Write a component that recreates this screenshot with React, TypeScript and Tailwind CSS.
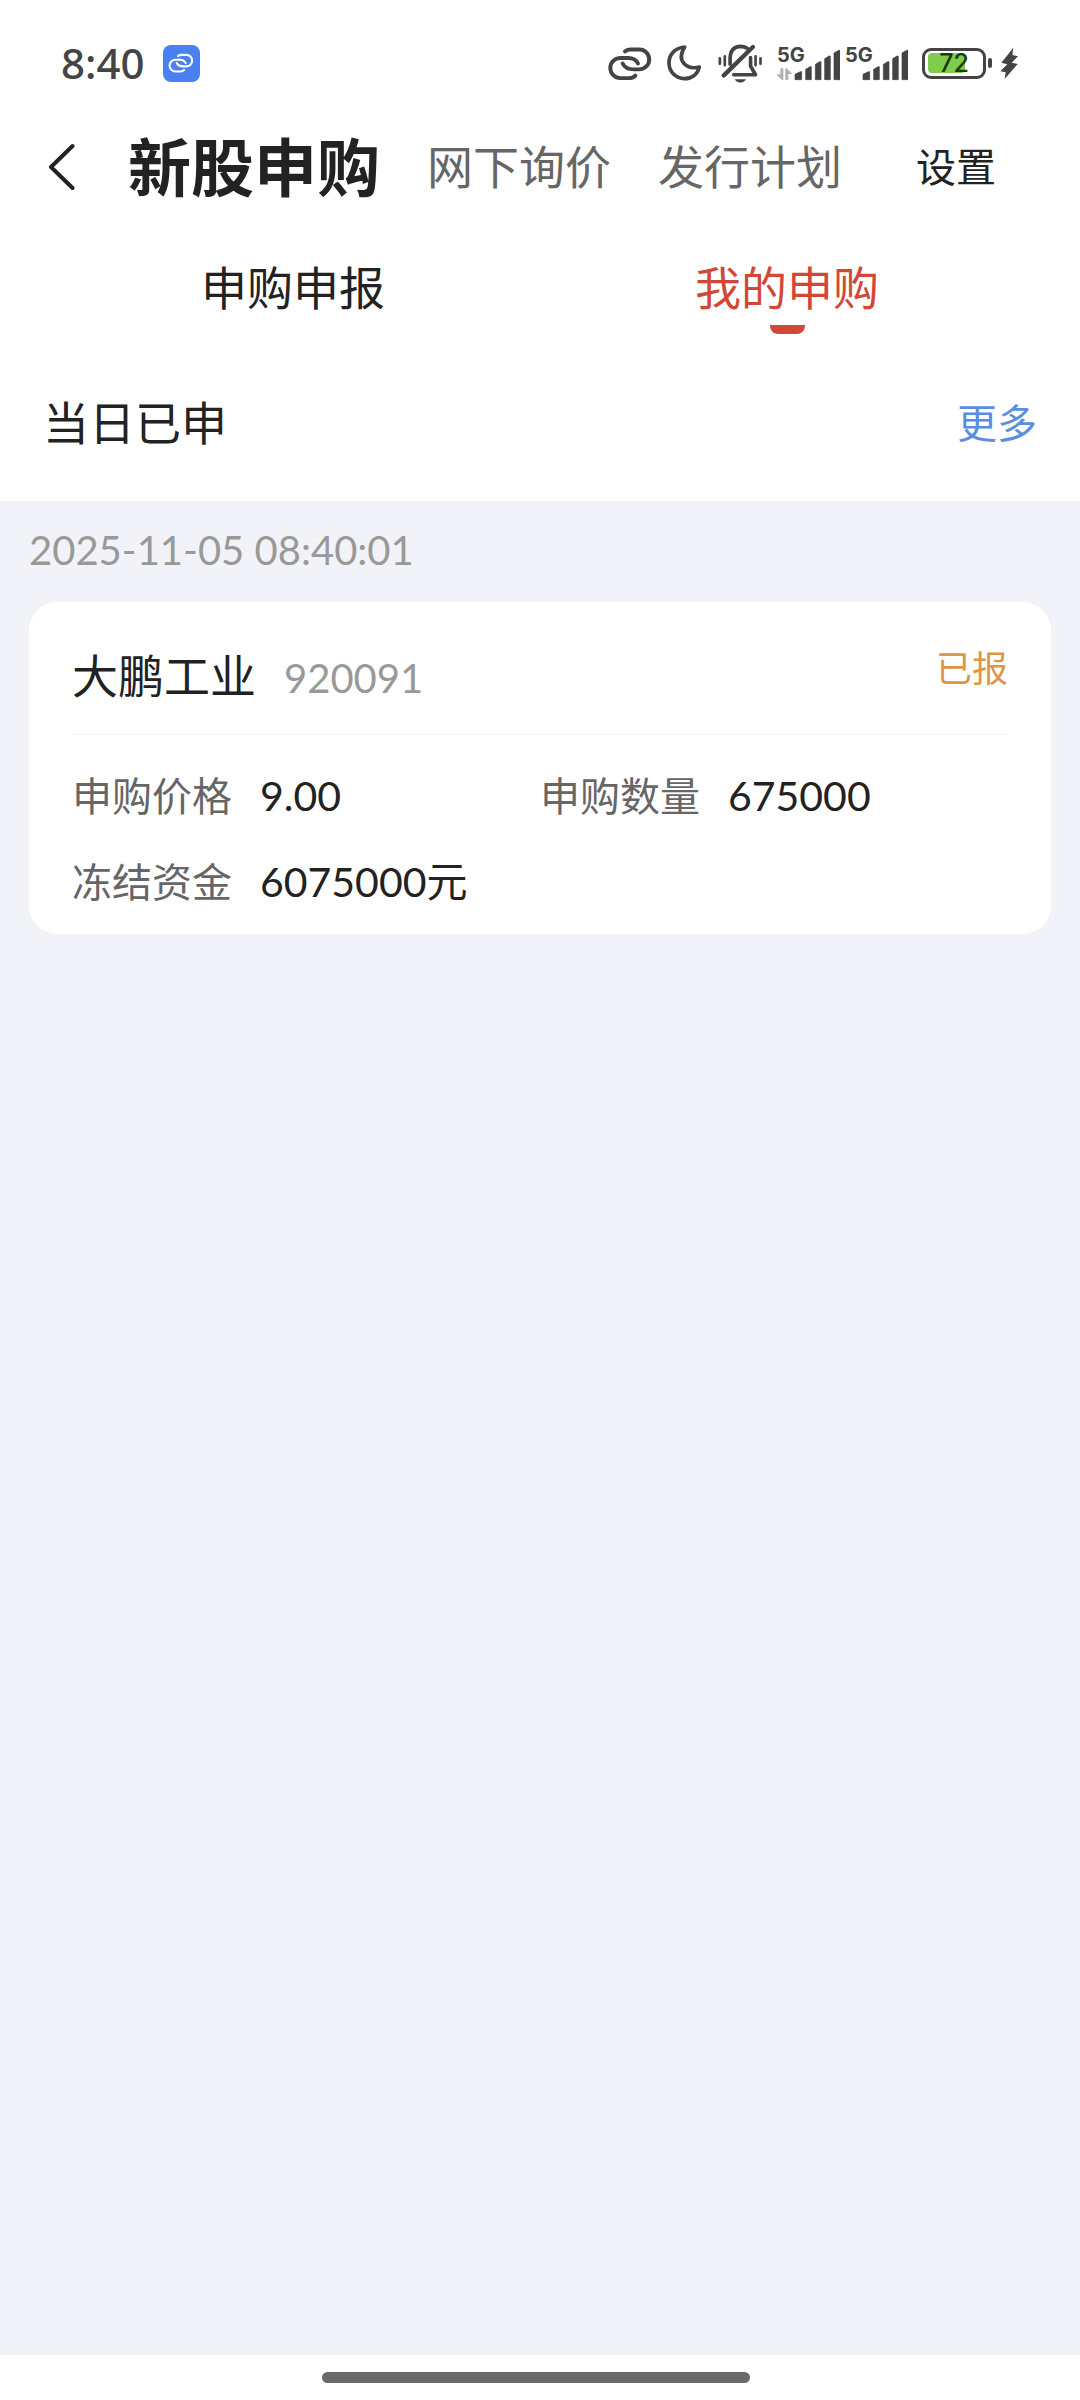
import React from "react";

const bars = [
  { x: 615, w: 20, top: 122 },
  { x: 647, w: 17, top: 107 },
  { x: 676, w: 17, top: 92 },
  { x: 704, w: 17, top: 75 },
  { x: 732, w: 18, top: 58 },
];

const fields = [
  { label: "申购价格", value: "9.00" },
  { label: "申购数量", value: "675000" },
  { label: "冻结资金", value: "6075000元" },
];

function LinkGlyph({ className, strokeWidth }: { className: string; strokeWidth: number }) {
  return (
    <svg
      viewBox="54 46 135 106"
      className={className}
      fill="none"
      stroke="currentColor"
      strokeWidth={strokeWidth}
      strokeLinecap="round"
      aria-hidden="true"
    >
      <path d="M106 62Q113 56 124 56H150A30.500 30.500 0 0 1 150 117H134Q107 117 99 99" />
      <path d="M146 99Q138 82 116 82H92A31 31 0 0 0 92 144H118Q130 144 138 136" />
    </svg>
  );
}

function Signal({ data }: { data?: boolean }) {
  return (
    <div className="relative h-[36px] w-[63px]">
      <svg viewBox="561 42 189 108" className="h-full w-full" aria-hidden="true">
        {bars.map((b) => (
          <path
            key={b.x}
            d={`M${b.x} 146V${b.top + 8}L${b.x + b.w - 4} ${b.top}H${b.x + b.w}V146Z`}
            fill="#444444"
            stroke="#444444"
            strokeWidth="2"
            strokeLinejoin="round"
          />
        ))}
        {data && (
          <g fill="#b0b0b0">
            <path d="M571 112H580V147H576L559 130H571Z" />
            <path d="M586 147H595V129H607L590 112H586Z" />
          </g>
        )}
      </svg>
      <span className="absolute top-0 left-0 font-['Inter'] text-[20px] leading-[20px] font-bold">5G</span>
    </div>
  );
}

function StatusBar() {
  return (
    <div className="flex h-[126px] items-center justify-between pr-[62px] pl-[61px] text-[#444444]">
      <div className="flex items-center gap-[18px]">
        <span className="font-['Noto_Sans'] text-[42px] leading-[48px] font-medium">8:40</span>
        <span className="flex size-[37px] items-center justify-center rounded-lg bg-[#4a80f0] text-white">
          <LinkGlyph className="h-[20px] w-[26px]" strokeWidth={11} />
        </span>
      </div>
      <div className="flex items-center">
        <LinkGlyph className="mr-[15px] h-[35px] w-[44px]" strokeWidth={12} />
        <svg
          viewBox="233 47 105 108"
          className="mr-4 h-[36px] w-[35px]"
          fill="none"
          stroke="currentColor"
          strokeWidth="11"
          strokeLinejoin="round"
          aria-hidden="true"
        >
          <path d="M286 53C254 56 239 78 239 101A47 47 0 0 0 285 148C308 148 325 134 330 113C296 122 258 98 286 53Z" />
        </svg>
        <svg
          viewBox="383 43 135 118"
          className="mr-[14px] h-[39px] w-[45px]"
          fill="none"
          stroke="currentColor"
          strokeWidth="11"
          strokeLinecap="round"
          strokeLinejoin="round"
          aria-hidden="true"
        >
          <path d="M419 104V84Q421 51 450 50Q462 50 471 56" />
          <path d="M488 52L400 138" strokeWidth="13" />
          <path d="M481 84V110L496 136H430" />
          <path d="M433 150H467Q461 160 450 160Q439 160 433 150Z" fill="currentColor" stroke="none" />
          <path d="M388 86V103M403 80V107M496 80V107M511 86V103" strokeWidth="8" />
        </svg>
        <Signal data />
        <div className="w-[5px]" />
        <Signal />
        <div className="ml-[14px] flex items-center gap-[2px]">
          <div className="relative flex h-[31px] w-[64px] items-center rounded-[9px] border-[3px] border-current px-[3px]">
            <span className="h-[20px] w-[37px] rounded-[4px] bg-[#80cc4c]" />
            <span className="absolute inset-0 flex items-center justify-center font-['Inter'] text-[25px] leading-[25px] font-medium text-[#1c3a08]">
              72
            </span>
          </div>
          <span className="h-[10px] w-[4px] rounded-sm bg-current" />
        </div>
        <svg viewBox="510 52 54 96" className="ml-2 h-[32px] w-[18px]" fill="currentColor" aria-hidden="true">
          <path d="M550 54L514 99L532 104L511 125L527 128L524 148L563 103L545 99L564 80L547 76Z" />
        </svg>
      </div>
    </div>
  );
}

export default function App() {
  return (
    <div className="flex min-h-screen flex-col bg-[#f2f3f8] font-['Lato','Noto_Sans_CJK_SC',sans-serif] text-[#222222]">
      <header className="bg-white">
        <StatusBar />
        <nav className="flex h-[82px] items-center pr-[84px] pl-[48px]">
          <button type="button" aria-label="返回" className="mr-[53px]">
            <svg
              viewBox="0 0 27 48"
              className="block h-[48px] w-[27px]"
              fill="none"
              stroke="currentColor"
              strokeWidth="4"
              strokeLinecap="round"
              strokeLinejoin="round"
              aria-hidden="true"
            >
              <path d="M24.500 3L3 24L24.500 45" />
            </svg>
          </button>
          <div className="flex items-center gap-[47px] whitespace-nowrap">
            <h1 className="text-[63px] leading-[80px] font-bold">新股申购</h1>
            <a href="#inquiry" className="text-[46px] leading-[64px] text-[#666666]">网下询价</a>
            <a href="#plan" className="text-[46px] leading-[64px] text-[#666666]">发行计划</a>
          </div>
          <button type="button" className="ml-auto text-[40px] leading-[56px] whitespace-nowrap">设置</button>
        </nav>
        <div role="tablist" className="grid grid-cols-2 px-[46px] pt-12 pb-[11px]">
          <button type="button" role="tab" aria-selected="false" className="flex flex-col items-center">
            <span className="text-[46px] leading-[64px]">申购申报</span>
          </button>
          <button type="button" role="tab" aria-selected="true" className="flex flex-col items-center gap-[5px] text-[#d14837]">
            <span className="text-[46px] leading-[64px]">我的申购</span>
            <span className="h-[9px] w-[35px] rounded-b-lg bg-current" />
          </button>
        </div>
        <div className="flex h-[156px] items-center justify-between px-[43px]">
          <h2 className="text-[46px] leading-[64px]">当日已申</h2>
          <a href="#more" className="text-[40px] leading-[56px] text-[#5b8de0]">更多</a>
        </div>
      </header>

      <main className="flex-1 px-[29px]">
        <time dateTime="2025-11-05T08:40:01" className="flex h-[101px] items-center pb-1 text-[40px] leading-[56px] text-[#999999]">
          2025-11-05 08:40:01
        </time>
        <article className="rounded-[28px] bg-white px-[43px] pb-[9px]">
          <div className="flex h-[133px] items-center justify-between border-b border-[#f3f3f3]">
            <div className="flex items-baseline gap-[28px] pt-4">
              <h3 className="text-[46px] leading-[64px]">大鹏工业</h3>
              <span className="text-[40px] leading-[56px] text-[#999999]">920091</span>
            </div>
            <span className="text-[36px] leading-[48px] text-[#dd9648]">已报</span>
          </div>
          <dl className="grid grid-cols-2 pt-[18px]">
            {fields.map((f) => (
              <div key={f.label} className="flex h-[86px] items-center gap-[28px]">
                <dt className="text-[40px] leading-[56px] text-[#666666]">{f.label}</dt>
                <dd className="text-[41px] leading-[56px]">{f.value}</dd>
              </div>
            ))}
          </dl>
        </article>
      </main>

      <footer className="flex h-[45px] items-center justify-center bg-white pr-2">
        <div className="h-[11px] w-[428px] rounded-full bg-[#6a6a6a]" />
      </footer>
    </div>
  );
}
